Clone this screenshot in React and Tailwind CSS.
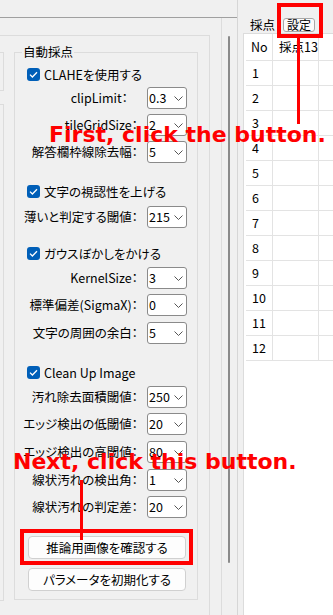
/**
 * 自動採点 settings panel with the 採点 grid on the right,
 * plus the red tutorial annotations drawn over it.
 */

function Chevron() {
  return (
    <svg width="9" height="5" viewBox="0 0 9 5" className="shrink-0">
      <polyline points="0.5,0.5 4.5,4.5 8.5,0.5" fill="none" stroke="#555" strokeWidth="1" />
    </svg>
  )
}

function Select({ value }) {
  return (
    <div className="w-[40px] h-[22px] shrink-0 flex items-center justify-between bg-white border border-[#8a8a8a] rounded-[3px] pl-[1px] pr-[3px]">
      <span>{value}</span>
      <Chevron />
    </div>
  )
}

function ParamRow({ label, value, mt, labelPad = 'pr-[9px]' }) {
  return (
    <div className={`flex items-center h-[22px] pr-[10px] ${mt}`}>
      <span className={`flex-1 text-right whitespace-nowrap ${labelPad}`}>{label}</span>
      <Select value={value} />
    </div>
  )
}

function CheckRow({ label, mt }) {
  return (
    <div className={`flex items-center h-[13px] ${mt}`}>
      <span className="ml-[12px] w-[13px] h-[13px] shrink-0 rounded-[3px] bg-[#005fb8] flex items-center justify-center">
        <svg width="9" height="7" viewBox="0 0 9 7">
          <polyline points="1,3.6 3.4,6 8,1.2" fill="none" stroke="#fff" strokeWidth="1.3" />
        </svg>
      </span>
      <span className="ml-[4px] whitespace-nowrap">{label}</span>
    </div>
  )
}

function WideButton({ children, mt }) {
  return (
    <button className={`ml-[13px] w-[158px] h-[23px] bg-[#fdfdfd] border border-[#d0d0d0] rounded-[4px] text-center ${mt}`}>
      {children}
    </button>
  )
}

export default function App() {
  const rows = Array.from({ length: 12 }, (_, i) => i + 1)

  return (
    <div className="relative w-[333px] h-[615px] overflow-hidden bg-[#f0f0f0] text-black text-[12.5px] leading-[16px] font-['Noto_Sans_CJK_JP',sans-serif] [font-feature-settings:'palt']">
      <div className="flex h-full">
        {/* left side: settings */}
        <div className="w-[238px] h-full flex flex-col border-r border-[#d6d6d6]">
          <div className="h-[17px] shrink-0" />
          <div className="flex-1 flex border-t border-[#a0a0a0]">
            <div className="w-[222px] border-r border-[#dcdcdc] pt-[17px]">
              <div className="w-[210px] h-full border-t border-r border-[#dcdcdc] pt-[16px] flex">
                {/* clipped neighbour panel */}
                <div className="w-[4px] flex flex-col">
                  <div className="h-[39px] border-t border-r border-b border-[#dcdcdc]" />
                  <div className="mt-[13px] h-[497px] border-t border-r border-b border-[#dcdcdc]" />
                </div>

                {/* group box */}
                <div className="relative ml-[10px] w-[184px] h-[548px] border border-[#dcdcdc] flex flex-col">
                  <span className="absolute left-[7px] top-[-9px] px-[1px] bg-[#f0f0f0]">自動採点</span>

                  <CheckRow label="CLAHEを使用する" mt="mt-[15px]" />
                  <ParamRow label="clipLimit：" value="0.3" mt="mt-[6px]" labelPad="pr-[19px]" />
                  <ParamRow label="tileGridSize：" value="2" mt="mt-[5px]" />
                  <ParamRow label="解答欄枠線除去幅：" value="5" mt="mt-[5px]" />

                  <CheckRow label="文字の視認性を上げる" mt="mt-[22px]" />
                  <ParamRow label="薄いと判定する閾値：" value="215" mt="mt-[8px]" />

                  <CheckRow label="ガウスぼかしをかける" mt="mt-[19px]" />
                  <ParamRow label="KernelSize：" value="3" mt="mt-[7px]" />
                  <ParamRow label="標準偏差(SigmaX)：" value="0" mt="mt-[5px]" />
                  <ParamRow label="文字の周囲の余白：" value="5" mt="mt-[6px]" />

                  <CheckRow label="Clean Up Image" mt="mt-[22px]" />
                  <ParamRow label="汚れ除去面積閾値：" value="250" mt="mt-[7px]" />
                  <ParamRow label="エッジ検出の低閾値：" value="20" mt="mt-[5px]" />
                  <ParamRow label="エッジ検出の高閾値：" value="80" mt="mt-[6px]" />
                  <ParamRow label="線状汚れの検出角：" value="1" mt="mt-[6px]" />
                  <ParamRow label="線状汚れの判定差：" value="20" mt="mt-[5px]" />

                  <WideButton mt="mt-[18px]">推論用画像を確認する</WideButton>
                  <WideButton mt="mt-[9px]">パラメータを初期化する</WideButton>
                </div>
              </div>
            </div>

            {/* thin scrollbar */}
            <div className="flex-1 pl-[6px] pt-[18px]">
              <div className="w-[2px] h-[527px] bg-[#8a8a8a] rounded-full" />
            </div>
          </div>
        </div>

        {/* right side: 採点 grid */}
        <div className="flex-1 flex flex-col">
          <div className="h-[33px] shrink-0 flex items-center pt-[17px] pl-[12px]">
            <span className="w-[25px]">採点</span>
            <button className="ml-[8px] h-[14px] px-[3px] border border-[#a8a8a8] rounded-[3px] bg-[#fbfbfb] text-[12px] leading-[12px]">
              設定
            </button>
          </div>
          <div className="flex-1 ml-[5px] pl-[2px] bg-white border-l border-t border-[#dcdcdc]">
            <div className="flex h-[27px] border-b border-[#e3e3e3]">
              <div className="w-[27px] border-r border-[#e3e3e3] pl-[5px] flex items-center">No</div>
              <div className="w-[46px] border-r border-[#e3e3e3] pl-[6px] flex items-center overflow-hidden whitespace-nowrap">採点13</div>
            </div>
            {rows.map(n => (
              <div key={n} className="flex h-[25px] border-b border-[#e3e3e3]">
                <div className="w-[27px] border-r border-[#e3e3e3] pl-[6px] flex items-center">{n}</div>
                <div className="w-[46px] border-r border-[#e3e3e3]" />
              </div>
            ))}
          </div>
        </div>
      </div>

      {/* tutorial annotations */}
      <div className="absolute left-[277px] top-[3px] w-[46px] h-[35px] border-[4px] border-[#ff0000]" />
      <div className="absolute left-[297px] top-[37px] w-[3px] h-[87px] bg-[#ff0000]" />
      <div className="absolute left-[49px] top-[124px] whitespace-nowrap text-[22px] leading-[22px] font-bold text-[#ff0000] font-['DejaVu_Sans',sans-serif] [font-feature-settings:normal]">
        First, click the button.
      </div>

      <div className="absolute left-[20px] top-[529px] w-[173px] h-[36px] border-[4px] border-[#ff0000]" />
      <div className="absolute left-[80px] top-[480px] w-[3px] h-[60px] bg-[#ff0000]" />
      <div className="absolute left-[13px] top-[451px] whitespace-nowrap text-[22px] leading-[22px] font-bold text-[#ff0000] font-['DejaVu_Sans',sans-serif] [font-feature-settings:normal]">
        Next, click this button.
      </div>
    </div>
  )
}
